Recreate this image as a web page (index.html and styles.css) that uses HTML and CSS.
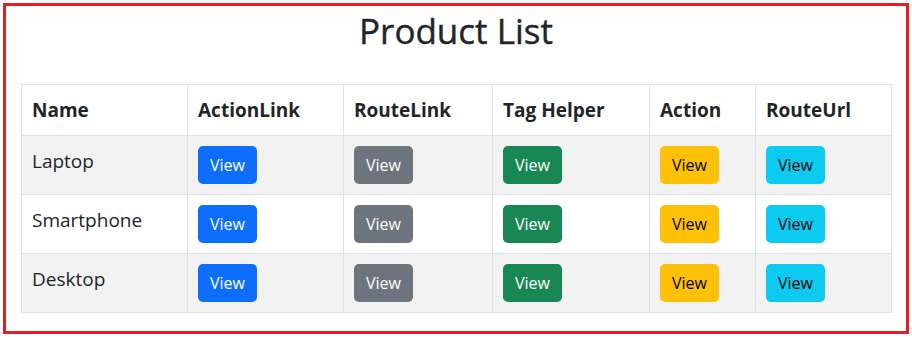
FILE: index.html
```html
<!DOCTYPE html>
<html lang="en">
<head>
    <meta charset="UTF-8">
    <meta name="viewport" content="width=device-width, initial-scale=1.0">
    <title>Product List</title>
    <link rel="stylesheet" href="styles.css">
</head>
<body>
    <div class="frame">
        <h1>Product List</h1>
        <table class="products">
            <colgroup>
                <col class="c-name">
                <col class="c-action-link">
                <col class="c-route-link">
                <col class="c-tag-helper">
                <col class="c-action">
                <col class="c-route-url">
            </colgroup>
            <thead>
                <tr>
                    <th>Name</th>
                    <th>ActionLink</th>
                    <th>RouteLink</th>
                    <th>Tag Helper</th>
                    <th>Action</th>
                    <th>RouteUrl</th>
                </tr>
            </thead>
            <tbody>
                <tr>
                    <td>Laptop</td>
                    <td><a href="#" class="btn btn-primary">View</a></td>
                    <td><a href="#" class="btn btn-secondary">View</a></td>
                    <td><a href="#" class="btn btn-success">View</a></td>
                    <td><a href="#" class="btn btn-warning">View</a></td>
                    <td><a href="#" class="btn btn-info">View</a></td>
                </tr>
                <tr>
                    <td>Smartphone</td>
                    <td><a href="#" class="btn btn-primary">View</a></td>
                    <td><a href="#" class="btn btn-secondary">View</a></td>
                    <td><a href="#" class="btn btn-success">View</a></td>
                    <td><a href="#" class="btn btn-warning">View</a></td>
                    <td><a href="#" class="btn btn-info">View</a></td>
                </tr>
                <tr>
                    <td>Desktop</td>
                    <td><a href="#" class="btn btn-primary">View</a></td>
                    <td><a href="#" class="btn btn-secondary">View</a></td>
                    <td><a href="#" class="btn btn-success">View</a></td>
                    <td><a href="#" class="btn btn-warning">View</a></td>
                    <td><a href="#" class="btn btn-info">View</a></td>
                </tr>
            </tbody>
        </table>
    </div>
</body>
</html>
```

FILE: styles.css
```css
body {
    margin: 0;
    font-family: "Open Sans", "Noto Sans", sans-serif;
    color: #212529;
    background: #fff;
}

.frame {
    margin: 3px;
    height: 325px;
    border: 3px solid #e81c24;
    padding: 0 15px;
}

h1 {
    margin: 4px 0 32px;
    font-size: 35px;
    font-weight: 500;
    line-height: 42px;
    text-align: center;
    -webkit-text-stroke: 0.4px #212529;
}

.products {
    width: 870px;
    table-layout: fixed;
    border-collapse: collapse;
    font-size: 19px;
}

.c-name { width: 166px; }
.c-action-link { width: 156px; }
.c-route-link { width: 149px; }
.c-tag-helper { width: 157px; }
.c-action { width: 106px; }
.c-route-url { width: 136px; }

.products th,
.products td {
    border: 1px solid #dee2e6;
    padding: 10px;
    line-height: 30px;
    text-align: left;
    vertical-align: top;
}

.products th {
    font-weight: 700;
}

/* striped rows */
.products tbody tr:nth-child(odd) td {
    background-color: #f2f2f2;
}

.btn {
    display: inline-block;
    vertical-align: top;
    padding: 6px 11px;
    border: 1px solid transparent;
    border-radius: 5px;
    font-size: 16px;
    line-height: 24px;
    text-decoration: none;
    color: #fff;
}

.btn-primary { background-color: #0d6efd; }
.btn-secondary { background-color: #6c757d; }
.btn-success { background-color: #198754; }
.btn-warning { background-color: #ffc107; color: #000; }
.btn-info { background-color: #0dcaf0; color: #000; }
```
